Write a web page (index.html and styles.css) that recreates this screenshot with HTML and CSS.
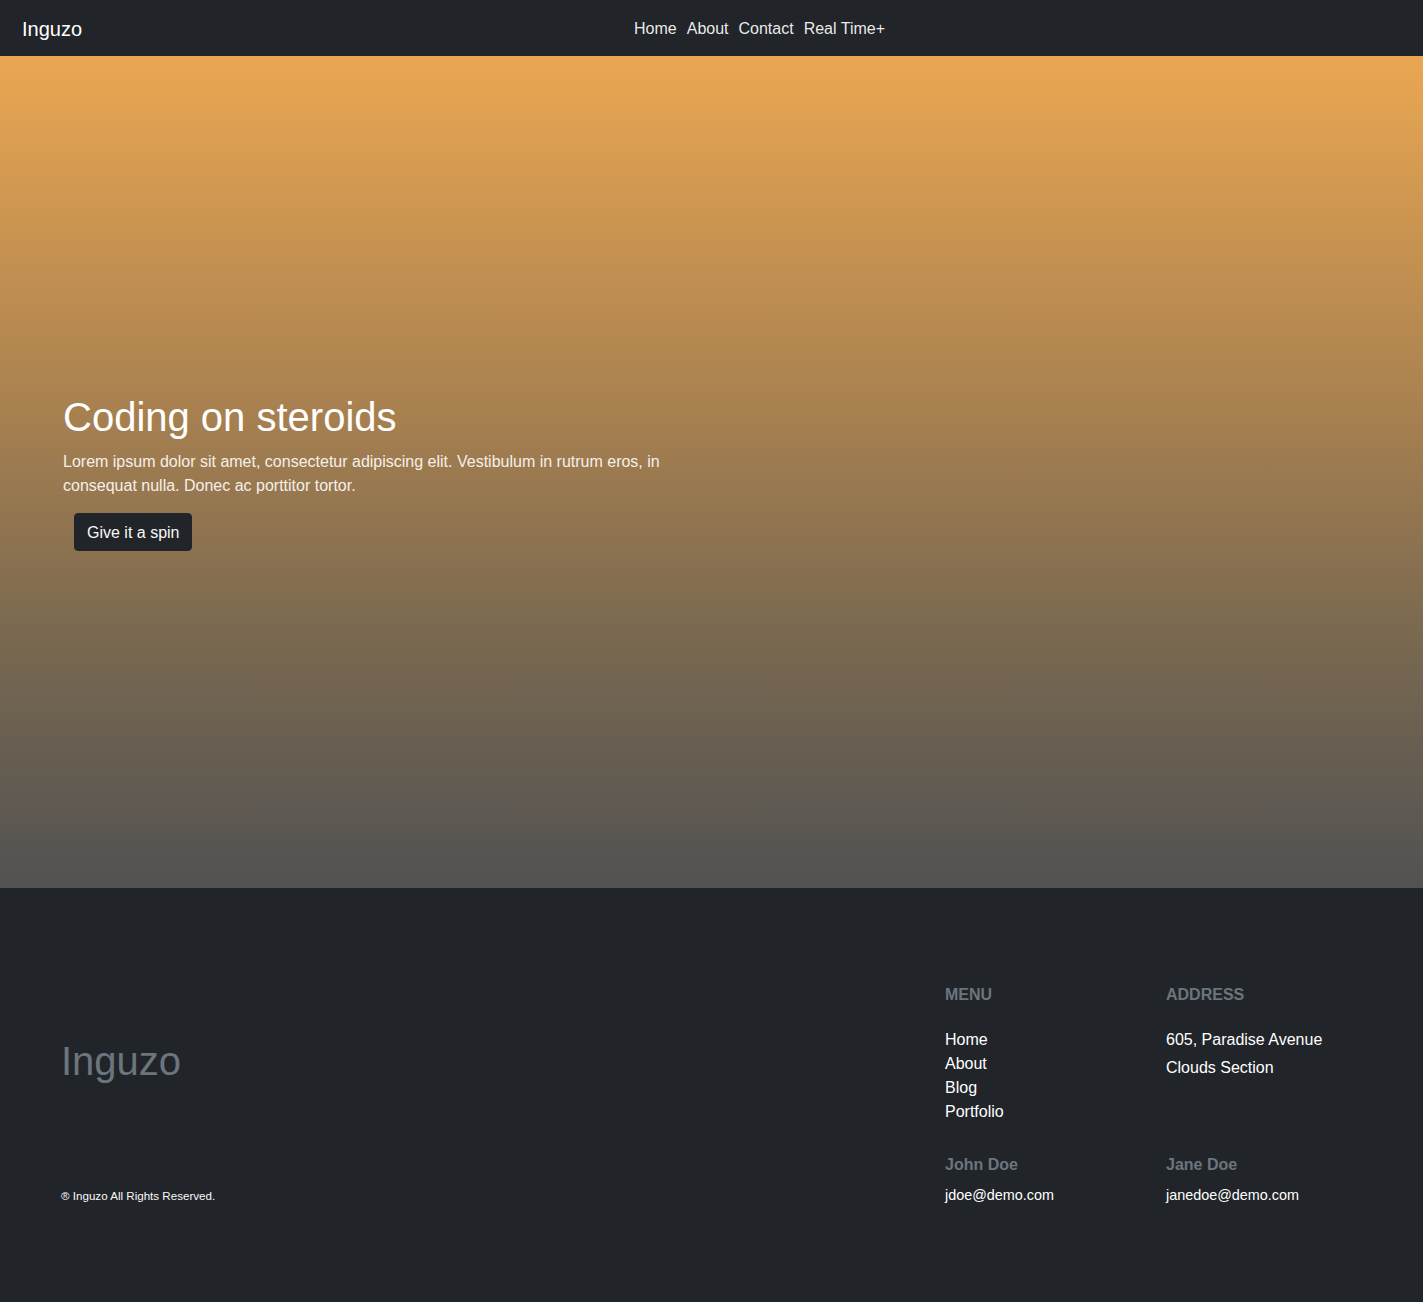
FILE: index.html
```html
<!DOCTYPE html>
<html lang="en">
<head>
<meta charset="utf-8">
<title>Inguzo</title>
<link rel="stylesheet" href="styles.css">
</head>
<body>
<header class="navbar">
  <a class="brand" href="#">Inguzo</a>
  <nav class="nav">
    <a href="#">Home</a>
    <a href="#">About</a>
    <a href="#">Contact</a>
    <a href="#">Real Time+</a>
  </nav>
</header>
<section class="hero">
  <div class="hero-content">
    <h1>Coding on steroids</h1>
    <p>Lorem ipsum dolor sit amet, consectetur adipiscing elit. Vestibulum in rutrum eros, in consequat nulla. Donec ac porttitor tortor.</p>
    <a class="btn" href="#">Give it a spin</a>
  </div>
</section>
<footer class="footer">
  <div class="footer-left">
    <div class="footer-brand">Inguzo</div>
    <div class="copyright">&reg; Inguzo All Rights Reserved.</div>
  </div>
  <div class="footer-grid">
    <div class="col">
      <h6 class="heading">MENU</h6>
      <ul class="links">
        <li><a href="#">Home</a></li>
        <li><a href="#">About</a></li>
        <li><a href="#">Blog</a></li>
        <li><a href="#">Portfolio</a></li>
      </ul>
    </div>
    <div class="col">
      <h6 class="heading">ADDRESS</h6>
      <p class="addr">605, Paradise Avenue</p>
      <p class="addr">Clouds Section</p>
    </div>
    <div class="col">
      <h6 class="name">John Doe</h6>
      <div class="email">jdoe@demo.com</div>
    </div>
    <div class="col">
      <h6 class="name">Jane Doe</h6>
      <div class="email">janedoe@demo.com</div>
    </div>
  </div>
</footer>
</body>
</html>
```

FILE: styles.css
```css
* { box-sizing: border-box; }
html, body { margin: 0; padding: 0; }
body {
  font-family: "Liberation Sans", Arial, sans-serif;
  font-size: 16px;
  line-height: 1.5;
  color: #fff;
  background: #212529;
}
a { color: inherit; text-decoration: none; }

.navbar {
  height: 56px;
  background: #212529;
  display: flex;
  align-items: center;
  padding: 1px 22px 0;
}
.brand {
  font-size: 20px;
  color: #fff;
  margin-right: 36px;
  line-height: 30px;
}
.nav {
  margin-left: auto;
  margin-right: auto;
  display: flex;
}
.nav a {
  padding: 0 5px;
  color: rgba(255,255,255,0.92);
  font-size: 16px;
}

.hero {
  height: 832px;
  background: linear-gradient(to bottom, #eaa752 0%, #a98150 42%, #7c6a50 68%, #525252 100%);
  display: flex;
  align-items: center;
  padding-left: 63px;
}
.hero-content { width: 620px; }
.hero h1 {
  margin: 0 0 9px;
  font-size: 40px;
  font-weight: 500;
  line-height: 48px;
  color: #fff;
}
.hero p {
  margin: 0 0 15px;
  font-size: 16px;
  line-height: 24px;
  color: #f5f0ea;
}
.btn {
  display: inline-block;
  margin-left: 11px;
  padding: 7px 12px 5px;
  border: 1px solid #212529;
  border-radius: 4px;
  background: #212529;
  color: #f8f9fa;
  line-height: 24px;
}

.footer {
  height: 414px;
  display: flex;
  padding: 96px 36px 0 61px;
}
.footer-left {
  flex: 1;
  display: flex;
  flex-direction: column;
}
.footer-brand {
  margin-top: 53px;
  font-size: 40px;
  line-height: 48px;
  color: #6c757d;
}
.copyright {
  margin-top: 104px;
  font-size: 11.6px;
  line-height: 14px;
  color: #f8f9fa;
}
.footer-grid {
  width: 442px;
  padding-top: 1px;
  display: grid;
  grid-template-columns: 221px 221px;
  grid-template-rows: 170px auto;
}
.heading, .name {
  margin: 0;
  font-size: 16px;
  font-weight: 700;
  line-height: 19px;
  color: #6c757d;
}
.heading { margin-bottom: 24px; }
.links { list-style: none; margin: 0; padding: 0; }
.links li { line-height: 24px; }
.addr { margin: 0 0 4px; line-height: 24px; }
.name { margin-bottom: 13px; }
.email { font-size: 14.4px; line-height: 17px; }
```
